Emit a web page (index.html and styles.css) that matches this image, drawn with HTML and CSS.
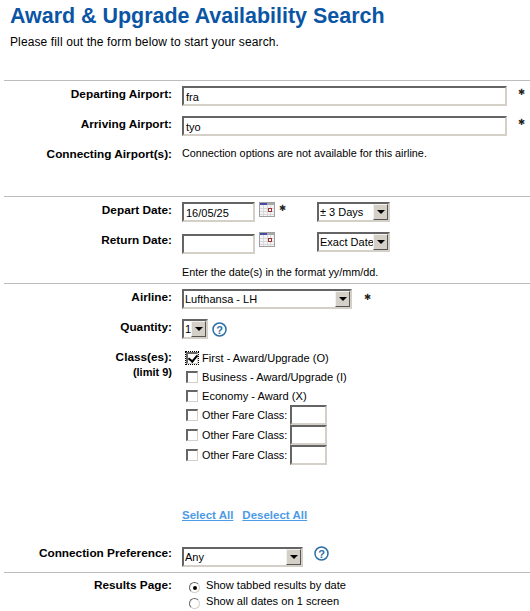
FILE: index.html
```html
<!DOCTYPE html>
<html lang="en">
<head>
<meta charset="utf-8">
<title>Award &amp; Upgrade Availability Search</title>
<link rel="stylesheet" href="styles.css">
</head>
<body>
<header class="intro">
  <h1>Award &amp; Upgrade Availability Search</h1>
  <p>Please fill out the form below to start your search.</p>
</header>
<form class="form">
  <section class="group group-airports">
    <div class="row row-30">
      <label class="label">Departing Airport:</label>
      <input class="text text-wide" type="text" value="fra">
      <span class="req req-far">&#10033;</span>
    </div>
    <div class="row row-30">
      <label class="label">Arriving Airport:</label>
      <input class="text text-wide" type="text" value="tyo">
      <span class="req req-far">&#10033;</span>
    </div>
    <div class="row">
      <span class="label">Connecting Airport(s):</span>
      <span class="note">Connection options are not available for this airline.</span>
    </div>
  </section>

  <section class="group group-dates">
    <div class="row row-30">
      <label class="label">Depart Date:</label>
      <input class="text text-date" type="text" value="16/05/25">
      <svg class="cal" width="16" height="15" viewBox="0 0 16 15"><rect x="0.5" y="0.5" width="15" height="14" fill="#f4f4f4" stroke="#a0a0a0"/><rect x="1" y="1" width="14" height="2" fill="#a8a8a8"/><rect x="1" y="1" width="7" height="2" fill="#4a4aa8"/><path d="M1 6.5h14M1 9.5h14M1 12.5h14M4.5 3v11M8.5 3v11M11.5 3v11" stroke="#d8d8d8"/><rect x="9.5" y="6.5" width="3" height="3" fill="#fff" stroke="#a03030"/></svg>
      <span class="req req-date">&#10033;</span>
      <span class="select select-range"><select><option>&#177; 3 Days</option></select><i class="arrow"></i></span>
    </div>
    <div class="row row-return">
      <label class="label">Return Date:</label>
      <input class="text text-date text-low" type="text">
      <svg class="cal" width="16" height="15" viewBox="0 0 16 15"><rect x="0.5" y="0.5" width="15" height="14" fill="#f4f4f4" stroke="#a0a0a0"/><rect x="1" y="1" width="14" height="2" fill="#a8a8a8"/><rect x="1" y="1" width="7" height="2" fill="#4a4aa8"/><path d="M1 6.5h14M1 9.5h14M1 12.5h14M4.5 3v11M8.5 3v11M11.5 3v11" stroke="#d8d8d8"/><rect x="9.5" y="6.5" width="3" height="3" fill="#fff" stroke="#a03030"/></svg>
      <span class="spacer-req"></span>
      <span class="select select-range"><select><option>Exact Date</option></select><i class="arrow"></i></span>
    </div>
    <p class="note hint">Enter the date(s) in the format yy/mm/dd.</p>
  </section>

  <section class="group group-options">
    <div class="row row-30">
      <label class="label">Airline:</label>
      <span class="select select-airline"><select><option>Lufthansa - LH</option></select><i class="arrow"></i></span>
      <span class="req req-airline">&#10033;</span>
    </div>
    <div class="row row-30">
      <label class="label">Quantity:</label>
      <span class="select select-qty"><select><option>1</option></select><i class="arrow"></i></span>
      <svg class="help help-qty" width="15" height="15" viewBox="0 0 15 15"><circle cx="7.5" cy="7.5" r="6.5" fill="#fff" stroke="#2a6ea6" stroke-width="1.5"/><text x="7.5" y="11.5" text-anchor="middle" class="help-q">?</text></svg>
    </div>
    <div class="row classes">
      <div class="label">Class(es):<small>(limit 9)</small></div>
      <div class="class-list">
        <label class="opt opt-focus"><input type="checkbox" checked><span>First - Award/Upgrade (O)</span></label>
        <label class="opt"><input type="checkbox"><span>Business - Award/Upgrade (I)</span></label>
        <label class="opt"><input type="checkbox"><span>Economy - Award (X)</span></label>
        <label class="opt opt-other"><input type="checkbox"><span>Other Fare Class:</span><input class="text text-fare" type="text"></label>
        <label class="opt opt-other"><input type="checkbox"><span>Other Fare Class:</span><input class="text text-fare" type="text"></label>
        <label class="opt opt-other"><input type="checkbox"><span>Other Fare Class:</span><input class="text text-fare" type="text"></label>
      </div>
    </div>
    <div class="links"><a href="#">Select All</a><a href="#">Deselect All</a></div>
    <div class="row row-pref">
      <label class="label">Connection Preference:</label>
      <span class="select select-pref"><select><option>Any</option></select><i class="arrow"></i></span>
      <svg class="help help-pref" width="15" height="15" viewBox="0 0 15 15"><circle cx="7.5" cy="7.5" r="6.5" fill="#fff" stroke="#2a6ea6" stroke-width="1.5"/><text x="7.5" y="11.5" text-anchor="middle" class="help-q">?</text></svg>
    </div>
  </section>

  <section class="group group-results">
    <div class="row">
      <span class="label">Results Page:</span>
      <div class="radios">
        <label class="radio"><input type="radio" name="results" checked><span>Show tabbed results by date</span></label>
        <label class="radio"><input type="radio" name="results"><span>Show all dates on 1 screen</span></label>
      </div>
    </div>
  </section>
</form>
</body>
</html>
```
FILE: styles.css
```css
* { box-sizing: border-box; }
html, body { height: 611px; overflow: hidden; }
body {
  margin: 0;
  background: #fff;
  color: #000;
  font-family: "Liberation Sans", Arial, sans-serif;
  font-size: 11px;
}
.intro { padding: 4px 0 0 10px; height: 80px; }
h1 {
  margin: 0;
  color: #0b55a5;
  font-size: 21.45px;
  line-height: 24px;
  font-weight: bold;
}
.intro p { margin: 7px 0 0; font-size: 12px; letter-spacing: 0.12px; line-height: 14px; }
.form { margin: 0; }
.group { margin-left: 4px; border-top: 1px solid #bdbdbd; padding-top: 5px; }
.group-airports { height: 116px; }
.group-dates { height: 87px; }
.group-options { height: 289px; }
.row { display: flex; align-items: flex-start; margin-left: -4px; }
.row-30 { height: 30px; }
.row-return { height: 30px; }
.label {
  width: 172px;
  flex: none;
  margin-right: 10px;
  text-align: right;
  font-size: 11.8px;
  font-weight: bold;
  line-height: 16px;
}
.label small { display: block; font-size: 11px; line-height: 15px; }
.note { font-size: 10.8px; line-height: 14px; margin: 0; }
.hint { margin: 3px 0 0 178px; }
.text {
  height: 20px;
  padding: 1px 1px 0 2px;
  border: 2px solid;
  border-color: #646464 #d4d0c8 #d4d0c8 #646464;
  background: #fff;
  color: #000;
  font: 11px "Liberation Sans", Arial, sans-serif;
  border-radius: 0;
  outline: none;
}
.text-wide { width: 325px; }
.text-date { width: 73px; }
.text-low { margin-top: 2px; }
.text-fare { width: 37px; }
.cal { margin-left: 4px; flex: none; }
.req { font-family: "DejaVu Sans", sans-serif; font-size: 8.5px; line-height: 13px; color: #222; }
.req-far { margin-left: 11px; }
.req-date { margin-left: 4px; width: 9px; }
.spacer-req { width: 13px; flex: none; }
.req-airline { margin: 2px 0 0 12px; }
.select {
  position: relative;
  display: inline-block;
  height: 20px;
  flex: none;
  border: 2px solid;
  border-color: #646464 #d4d0c8 #d4d0c8 #646464;
  background: #fff;
}
.select select {
  appearance: none;
  display: block;
  width: 100%;
  height: 16px;
  border: 0;
  padding: 0 0 0 1px;
  border-radius: 0;
  background: #fff;
  color: #000;
  font: 11px "Liberation Sans", Arial, sans-serif;
}
.arrow {
  position: absolute;
  top: 0;
  right: 0;
  width: 15px;
  height: 16px;
  background: #d4d0c8;
  border: 1px solid;
  border-color: #f4f2ec #555 #555 #f4f2ec;
}
.arrow::after {
  content: "";
  position: absolute;
  left: 2.5px;
  top: 5px;
  border: 4px solid transparent;
  border-top: 4px solid #000;
  border-bottom: 0;
}
.select-range { width: 73px; margin-left: 29px; }
.select-airline { width: 170px; }
.select-qty { width: 26px; }
.select-pref { width: 121px; }
.help { flex: none; }
.help-q { font: bold 11px "Liberation Sans", Arial, sans-serif; fill: #2a6ea6; }
.help-qty { margin: 3px 0 0 4px; }
.help-pref { margin: -1px 0 0 11px; }
.class-list { display: flex; flex-direction: column; width: 200px; margin-top: -1px; }
.opt { display: flex; align-items: center; height: 19px; font-size: 11.1px; }
.opt-other { height: 20px; }
.opt span { margin-left: 4px; }
.opt-other span { font-size: 10.8px; }
.opt input[type="checkbox"] {
  appearance: none;
  position: relative;
  flex: none;
  width: 12px;
  height: 12px;
  margin: 0 0 0 4px;
  border-style: solid;
  border-width: 2px 1px 1px 2px;
  border-color: #666 #d4d0c8 #d4d0c8 #666;
  background: #fff;
}
.opt input[type="checkbox"]:checked::after {
  content: "";
  position: absolute;
  left: 2px;
  top: -1px;
  width: 4px;
  height: 7px;
  border: solid #000;
  border-width: 0 2px 2px 0;
  transform: rotate(40deg);
}
.opt-focus input[type="checkbox"] { outline: 1px dotted #000; outline-offset: 0; }
.opt-other .text-fare { margin-left: 3px; }
.links { margin: 43px 0 0 178px; height: 14px; line-height: 14px; }
.links a { color: #4d9be6; font-weight: bold; font-size: 11.5px; margin-right: 9px; }
.row-pref { margin-top: 25px; }
.row-pref .label { margin-top: -2px; }
.group-results { padding-top: 4px; }
.radios { display: flex; flex-direction: column; }
.radio { display: flex; align-items: flex-start; height: 16px; font-size: 11.1px; line-height: 16px; }
.radio input {
  appearance: none;
  position: relative;
  flex: none;
  width: 11px;
  height: 11px;
  margin: 5px 6px 0 7px;
  border-radius: 50%;
  border: 1px solid;
  border-color: #666 #d4d0c8 #d4d0c8 #666;
  background: #fff;
}
.radio input:checked::after {
  content: "";
  position: absolute;
  left: 2.5px;
  top: 2.5px;
  width: 4px;
  height: 4px;
  border-radius: 50%;
  background: #000;
}
```
